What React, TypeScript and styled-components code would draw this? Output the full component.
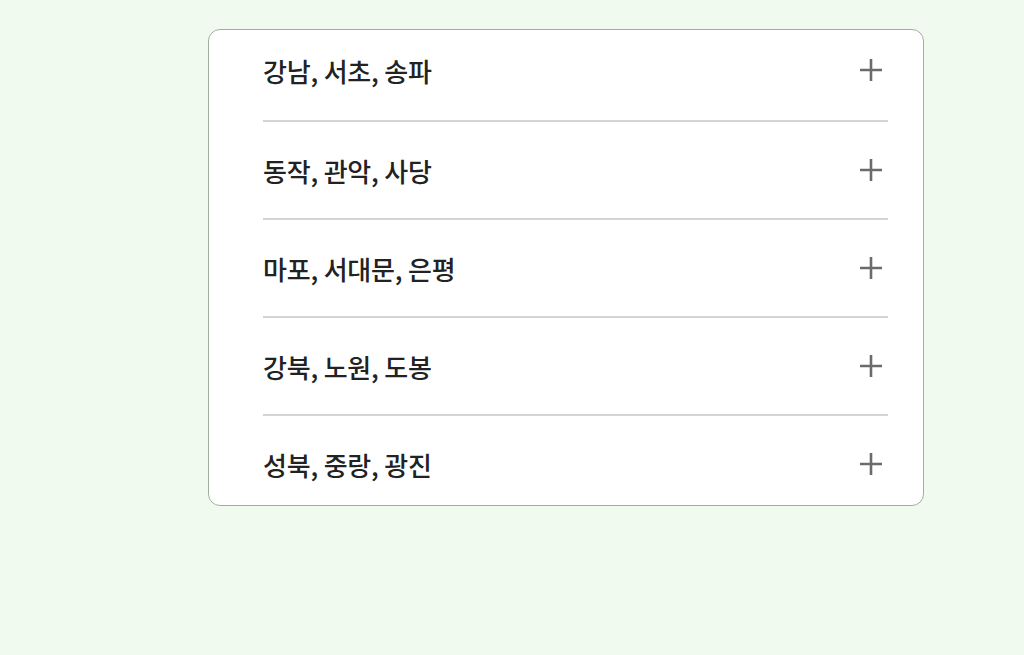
import React from 'react';
import styled, { createGlobalStyle } from 'styled-components';

const GlobalStyle = createGlobalStyle`
  html, body {
    margin: 0;
    padding: 0;
    background: #f1faee;
  }
  body {
    font-family: "Noto Sans CJK KR", "Noto Sans", sans-serif;
  }
`;

const Page = styled.div`
  width: 1024px;
  height: 655px;
  padding: 29px 0 0 208px;
  box-sizing: border-box;
`;

const Card = styled.div`
  width: 716px;
  box-sizing: border-box;
  background: #ffffff;
  border: 1px solid #a3ad9f;
  border-radius: 12px;
  padding: 0 35px 0 54px;
`;

const Item = styled.div<{ $first?: boolean }>`
  border-top: ${p => (p.$first ? 'none' : '2px solid #d4d4d4')};
  padding-top: ${p => (p.$first ? '0' : '7px')};
  margin-top: ${p => (p.$first ? '0' : '7px')};
`;

const Header = styled.button<{ $first?: boolean }>`
  width: 100%;
  height: ${p => (p.$first ? '83px' : '82px')};
  display: flex;
  align-items: center;
  justify-content: space-between;
  padding: 0 0 ${p => (p.$first ? '3px' : '0')};
  border: none;
  background: none;
  cursor: pointer;
  font-family: "Noto Sans CJK KR", "Noto Sans", sans-serif;
  font-size: 26px;
  font-weight: 500;
  letter-spacing: -0.2px;
  color: #222222;
  text-align: left;
`;

const PlusIcon = styled.svg`
  width: 26px;
  height: 26px;
  margin-right: 4px;
  flex-shrink: 0;
`;

const regions = [
  '강남, 서초, 송파',
  '동작, 관악, 사당',
  '마포, 서대문, 은평',
  '강북, 노원, 도봉',
  '성북, 중랑, 광진',
];

export default function App() {
  return (
    <>
      <GlobalStyle />
      <Page>
        <Card>
          {regions.map((name, i) => (
            <Item key={name} $first={i === 0}>
              <Header type="button" $first={i === 0}>
                <span>{name}</span>
                <PlusIcon viewBox="0 0 26 26" fill="none">
                  <path d="M13 2v22M2 13h22" stroke="#6b6b6b" strokeWidth="2.6" />
                </PlusIcon>
              </Header>
            </Item>
          ))}
        </Card>
      </Page>
    </>
  );
}
